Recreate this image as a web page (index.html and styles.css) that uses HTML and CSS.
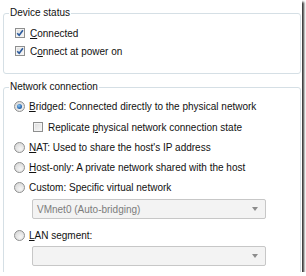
FILE: index.html
```html
<!DOCTYPE html>
<html lang="en">

<head>
    <meta charset="UTF-8">
    <title>Network Adapter</title>
    <link rel="stylesheet" href="styles.css">
</head>

<body>
    <div class="shot">
        <fieldset class="group device-status">
            <legend>Device status</legend>
            <div class="row">
                <span class="check checked"><svg viewBox="0 0 8 8"><path d="M1.2 4.2 L3.2 6.3 L6.9 1.3" /></svg></span>
                <span><u>C</u>onnected</span>
            </div>
            <div class="row">
                <span class="check checked"><svg viewBox="0 0 8 8"><path d="M1.2 4.2 L3.2 6.3 L6.9 1.3" /></svg></span>
                <span>C<u>o</u>nnect at power on</span>
            </div>
        </fieldset>

        <fieldset class="group network">
            <legend>Network connection</legend>
            <div class="row">
                <span class="radio selected"></span>
                <span><u>B</u>ridged: Connected directly to the physical network</span>
            </div>
            <div class="row sub">
                <span class="check"></span>
                <span>Replicate <u>p</u>hysical network connection state</span>
            </div>
            <div class="row">
                <span class="radio"></span>
                <span><u>N</u>AT: Used to share the host's IP address</span>
            </div>
            <div class="row">
                <span class="radio"></span>
                <span><u>H</u>ost-only: A private network shared with the host</span>
            </div>
            <div class="row">
                <span class="radio"></span>
                <span>Custom: Specific virtual network</span>
            </div>
            <div class="select">
                <span>VMnet0 (Auto-bridging)</span>
                <span class="arrow"></span>
            </div>
            <div class="row">
                <span class="radio"></span>
                <span><u>L</u>AN segment:</span>
            </div>
            <div class="select">
                <span></span>
                <span class="arrow"></span>
            </div>
        </fieldset>
    </div>
</body>

</html>
```

FILE: styles.css
```css
body {
    margin: 0;
    padding: 0;
    background-color: #fff;
    font-family: "Liberation Sans", Arial, sans-serif;
    font-size: 10px;
    color: #111;
}

.shot {
    width: 302px;
    height: 272px;
    overflow: hidden;
    background-color: #fff;
    box-shadow: 2px 2px 2px rgba(0, 0, 0, 0.8);
}

.group {
    box-sizing: border-box;
    width: 298px;
    margin: 0 0 0 3px;
    padding: 0 0 0 10px;
    border: 1px solid #d5dfe5;
    border-radius: 3px;
}

.group legend {
    margin-left: -5px;
    padding: 0 1px;
    line-height: 12px;
}

.device-status {
    margin-top: 7px;
    padding-left: 11px;
    padding-bottom: 13px;
}

.device-status .row {
    height: 18px;
}

.device-status legend {
    margin-left: -6px;
}

.network {
    margin-top: 7px;
    padding-bottom: 10px;
}

.row {
    display: flex;
    align-items: center;
    height: 20px;
    white-space: nowrap;
}

.row u {
    text-decoration-thickness: 1px;
    text-underline-offset: 1px;
}

.device-status .row:first-of-type {
    margin-top: 5px;
}

.network .row:first-of-type {
    margin-top: 3px;
}

.sub {
    margin-top: 1px;
    padding-left: 19px;
}

/* Checkboxes */
.check {
    box-sizing: border-box;
    width: 10px;
    height: 10px;
    margin-right: 5px;
    border: 1px solid #8e8f8f;
    background: linear-gradient(135deg, #dcdcdc, #f8f8f8);
    box-shadow: inset 0 0 0 1px #f4f4f4;
    display: flex;
    align-items: center;
    justify-content: center;
}

.check svg {
    width: 8px;
    height: 8px;
}

.check path {
    fill: none;
    stroke: #2a5a9e;
    stroke-width: 1.6;
}

/* Radio buttons */
.radio {
    box-sizing: border-box;
    width: 11px;
    height: 11px;
    margin-right: 4px;
    border: 1px solid #8e8f8f;
    border-radius: 50%;
    background: radial-gradient(circle at 60% 65%, #f6f6f6 0%, #dcdcdc 70%, #cfcfcf 100%);
    position: relative;
}

.radio.selected::after {
    content: "";
    position: absolute;
    left: 2px;
    top: 2px;
    width: 5px;
    height: 5px;
    border-radius: 50%;
    background: radial-gradient(circle at 40% 35%, #8ec8f2 0%, #2f6fb8 55%, #163f78 100%);
}

/* Dropdowns */
.select {
    box-sizing: border-box;
    display: flex;
    align-items: center;
    justify-content: space-between;
    width: 234px;
    height: 20px;
    margin: 2px 0 0 18px;
    padding: 0 4px 0 4px;
    border: 1px solid #c7c7c7;
    border-radius: 2px;
    background-color: #f3f3f3;
    color: #7c7c7c;
}

.select + .row {
    margin-top: 6px;
}

.network .row + .select:last-child {
    margin-top: 1px;
}

.arrow {
    width: 0;
    height: 0;
    margin-right: 3px;
    border-left: 3px solid transparent;
    border-right: 3px solid transparent;
    border-top: 4px solid #8c8c8c;
}
```
